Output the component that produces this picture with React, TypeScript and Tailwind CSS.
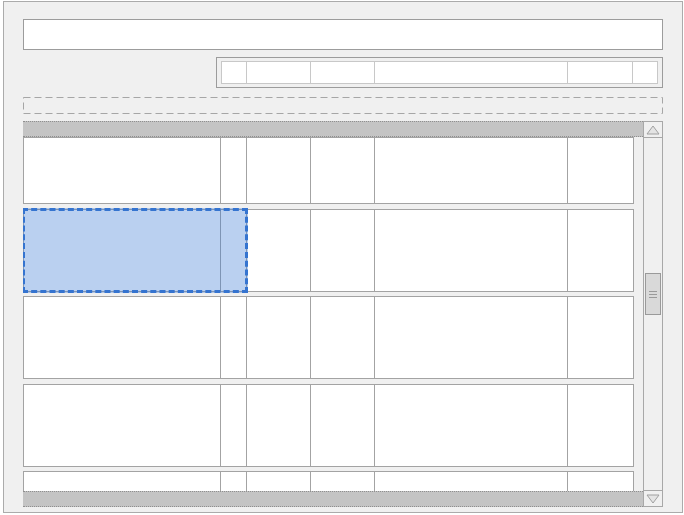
export default function App() {
  const headerCols = ['w-[25px]', 'w-[64px]', 'w-[64px]', 'w-[193px]', 'w-[65px]']
  const rowCols = ['w-[197px]', 'w-[26px]', 'w-[64px]', 'w-[64px]', 'w-[193px]']
  const rows = [
    { h: 'h-[67px]', mt: 'mt-0' },
    { h: 'h-[83px]', mt: 'mt-[5px]', selected: true },
    { h: 'h-[83px]', mt: 'mt-[4px]' },
    { h: 'h-[83px]', mt: 'mt-[5px]' },
    { h: 'h-[83px]', mt: 'mt-[4px]' },
  ]

  return (
    <div className="h-[515px] w-[684px] bg-white pl-[3px] pt-[1px] font-['Liberation_Sans',sans-serif]">
      <div className="flex h-[512px] w-[680px] flex-col border border-[#ababab] bg-[#f0f0f0] px-[19px] pb-[5px] pt-[17px]">
        {/* search field */}
        <div className="h-[31px] shrink-0 border border-[#9c9c9c] bg-white" />

        {/* column header strip */}
        <div className="ml-auto mt-[7px] h-[31px] w-[447px] shrink-0 border border-[#9c9c9c] bg-[#f0f0f0] px-[4px] py-[3px]">
          <div className="flex h-full border border-[#c8c8c8] bg-white">
            {headerCols.map((w, i) => (
              <div key={i} className={`${w} h-full border-r border-[#c8c8c8]`} />
            ))}
            <div className="flex-1" />
          </div>
        </div>

        {/* drop zone */}
        <div className="relative mt-[9px] h-[17px] shrink-0">
          <svg className="absolute inset-0 h-full w-full" preserveAspectRatio="none">
            <rect
              x="0.5"
              y="0.5"
              width="calc(100% - 1px)"
              height="16"
              fill="none"
              stroke="#a6a6a6"
              strokeWidth="1"
              strokeDasharray="7 4"
            />
          </svg>
        </div>

        {/* grid */}
        <div className="mt-[7px] flex min-h-0 flex-1">
          <div className="flex min-w-0 flex-1 flex-col">
            <div className="h-[16px] shrink-0 border-y border-dotted border-[#8f8f8f] bg-[#c4c4c4]" />
            <div className="flex min-h-0 flex-1 flex-col overflow-hidden pr-[9px]">
              {rows.map((r, i) => (
                <div
                  key={i}
                  className={`relative flex shrink-0 border border-[#a3a3a3] bg-white ${r.h} ${r.mt}`}
                >
                  {rowCols.map((w, j) => (
                    <div key={j} className={`${w} h-full border-r border-[#a3a3a3]`} />
                  ))}
                  <div className="flex-1" />
                  {r.selected && (
                    <div className="absolute -left-[2px] -top-[2px] h-[85px] w-[226px] border-[3px] border-dashed border-[#3574d0] bg-[#3a78d4]/35" />
                  )}
                </div>
              ))}
            </div>
            <div className="h-[16px] shrink-0 border-y border-dotted border-[#8f8f8f] bg-[#c4c4c4]" />
          </div>

          {/* scrollbar */}
          <div className="flex w-[20px] shrink-0 flex-col border border-[#a8a8a8] bg-[#f0f0f0]">
            <div className="flex h-[16px] shrink-0 items-center justify-center border-b border-[#a8a8a8]">
              <svg width="14" height="10" viewBox="0 0 14 10">
                <polygon points="7,1 13,9 1,9" fill="#e4e4e4" stroke="#a0a0a0" strokeWidth="1" />
              </svg>
            </div>
            <div className="min-h-0 flex-1">
              <div className="mx-[1px] mt-[135px] flex h-[42px] flex-col items-center justify-center gap-[2px] border border-[#9a9a9a] bg-[#d9d9d9]">
                <div className="h-px w-[8px] bg-[#9a9a9a]" />
                <div className="h-px w-[8px] bg-[#9a9a9a]" />
                <div className="h-px w-[8px] bg-[#9a9a9a]" />
              </div>
            </div>
            <div className="flex h-[16px] shrink-0 items-center justify-center border-t border-[#a8a8a8]">
              <svg width="14" height="10" viewBox="0 0 14 10">
                <polygon points="1,1 13,1 7,9" fill="#e4e4e4" stroke="#a0a0a0" strokeWidth="1" />
              </svg>
            </div>
          </div>
        </div>
      </div>
    </div>
  )
}
